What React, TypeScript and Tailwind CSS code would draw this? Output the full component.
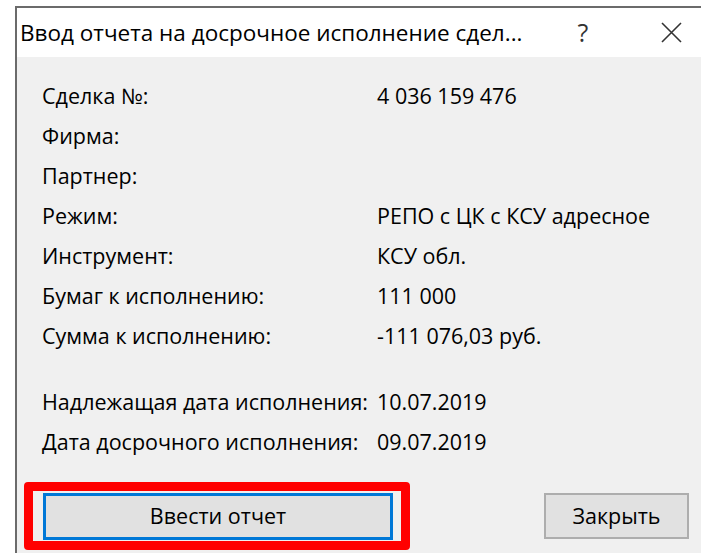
const rows: [string, string][] = [
  ["Сделка №:", "4 036 159 476"],
  ["Фирма:", ""],
  ["Партнер:", ""],
  ["Режим:", "РЕПО с ЦК с КСУ адресное"],
  ["Инструмент:", "КСУ обл."],
  ["Бумаг к исполнению:", "111 000"],
  ["Сумма к исполнению:", "-111 076,03 руб."],
];

const dates: [string, string][] = [
  ["Надлежащая дата исполнения:", "10.07.2019"],
  ["Дата досрочного исполнения:", "09.07.2019"],
];

const font = { fontFamily: '"Open Sans", "Noto Sans", sans-serif' };

function InfoRow({ label, value }: { label: string; value: string }) {
  return (
    <div className="grid h-10 grid-cols-[335px_1fr] items-center whitespace-nowrap">
      <span>{label}</span>
      <span>{value}</span>
    </div>
  );
}

function CloseGlyph() {
  return (
    <svg width="21" height="21" viewBox="0 0 21 21" fill="none" stroke="#333" strokeWidth="1.6">
      <path d="M1 1l19 19M20 1L1 20" />
    </svg>
  );
}

export default function App() {
  return (
    <div
      className="flex h-[553px] w-[701px] flex-col overflow-hidden bg-white pl-[15px] pt-[6px] text-[21.5px] text-black"
      style={font}
    >
      <div className="flex flex-1 flex-col border-l-2 border-t-2 border-[#6b6b6b]">
        {/* Title bar */}
        <div className="flex h-[49px] shrink-0 items-center bg-white pl-[3px]">
          <span className="flex-1 whitespace-nowrap text-[22.5px]">
            Ввод отчета на досрочное исполнение сдел...
          </span>
          <span className="w-[14px] text-center text-[25px] leading-none text-[#333]">?</span>
          <div className="ml-[71px] mr-[19px] flex h-[21px] w-[21px] items-center justify-center">
            <CloseGlyph />
          </div>
        </div>

        {/* Dialog body */}
        <div className="flex flex-1 flex-col bg-[#f0f0f0] pl-[7px]">
          <div className="pl-[18px] pt-[19px]">
            {rows.map(([l, v]) => (
              <InfoRow key={l} label={l} value={v} />
            ))}
            <div className="mt-[26px]">
              {dates.map(([l, v]) => (
                <InfoRow key={l} label={l} value={v} />
              ))}
            </div>
          </div>

          <div className="mt-[20px] flex items-start justify-between pr-[12px]">
            {/* highlighted submit button */}
            <div className="rounded-[4px] border-[9px] border-[#ff0000] pb-[1px] pl-[10px] pr-[8px] pt-[2px]">
              <button className="flex h-[47px] w-[350px] items-center justify-center border-[3px] border-[#0078d7] bg-[#e1e1e1]">
                Ввести отчет
              </button>
            </div>
            <button className="mt-[11px] flex h-[46px] w-[145px] items-center justify-center border-2 border-[#adadad] bg-[#e1e1e1]">
              Закрыть
            </button>
          </div>
        </div>
      </div>
    </div>
  );
}
